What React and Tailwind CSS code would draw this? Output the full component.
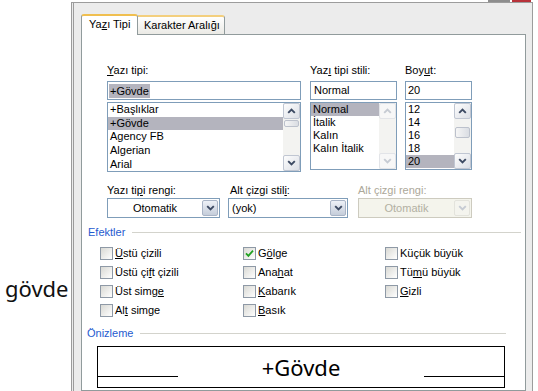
import React from 'react';

// ─── small parts ────────────────────────────────────────────────────────────

const Chevron = ({ up, disabled }) => (
  <svg width="9" height="6" viewBox="0 0 9 6" className={up ? 'rotate-180' : ''}>
    <path
      d="M1.2 1.2 L4.5 4.5 L7.8 1.2"
      fill="none"
      stroke={disabled ? '#c6cbd3' : '#3d4a63'}
      strokeWidth="1.9"
    />
  </svg>
);

const ScrollBtn = ({ up, disabled }) => (
  <div
    className={`h-[16px] flex items-center justify-center rounded-[2px] border ${
      disabled
        ? 'border-[#e2e4e8] bg-[#f7f7f7]'
        : 'border-[#c0c6d2] bg-linear-to-br from-[#fdfdfd] to-[#dcdfe6]'
    }`}
  >
    <Chevron up={up} disabled={disabled} />
  </div>
);

const ScrollBar = ({ disabled, thumbClass }) => (
  <div className="w-[17px] flex flex-col bg-[#f3f3f1]">
    <ScrollBtn up disabled={disabled} />
    {thumbClass && (
      <div
        className={`rounded-[2px] border border-[#bcc1cc] bg-linear-to-r from-[#f6f6f6] to-[#dadde3] ${thumbClass}`}
      />
    )}
    <div className="flex-1" />
    <ScrollBtn disabled={disabled} />
  </div>
);

const ListBox = ({ items, selected, boxClass, rowClass, disabled, thumbClass }) => (
  <div className={`flex border border-[#7f9db9] bg-white ${boxClass}`}>
    <div className="flex-1 flex flex-col">
      {items.map((it) => (
        <div
          key={it}
          className={`pl-[2px] flex items-center ${rowClass} ${it === selected ? 'bg-[#b4b4be]' : ''}`}
        >
          {it}
        </div>
      ))}
    </div>
    <ScrollBar disabled={disabled} thumbClass={thumbClass} />
  </div>
);

const Combo = ({ value, disabled, center, boxClass }) => (
  <div
    className={`h-[20px] flex items-center border ${boxClass} ${
      disabled ? 'border-[#cdcbbf] bg-[#f4f4ec]' : 'border-[#7f9db9] bg-white'
    }`}
  >
    <span
      className={`flex-1 ${center ? 'text-center' : 'pl-[3px]'} ${
        disabled ? 'text-[#b2b0a2]' : 'text-black'
      }`}
    >
      {value}
    </span>
    <div
      className={`w-[16px] h-[16px] mr-px flex items-center justify-center rounded-[2px] border ${
        disabled
          ? 'border-[#e3e3dc] bg-[#f4f4ee]'
          : 'border-[#a9b4c6] bg-linear-to-b from-[#eef1f7] to-[#c5cdda]'
      }`}
    >
      <Chevron disabled={disabled} />
    </div>
  </div>
);

const CheckBox = ({ checked, children }) => (
  <div className="flex items-center gap-[2px]">
    <div className="w-[13px] h-[13px] border border-[#8e99a6] bg-linear-to-br from-[#d9d9d4] to-white flex items-center justify-center">
      {checked && (
        <svg width="9" height="9" viewBox="0 0 9 9">
          <path d="M1 4.3 L3.4 6.8 L8 1.6" fill="none" stroke="#21a121" strokeWidth="1.8" />
        </svg>
      )}
    </div>
    <span>{children}</span>
  </div>
);

const Label = ({ children, disabled }) => (
  <div className={`h-[13px] leading-[13px] ${disabled ? 'text-[#aca899]' : 'text-black'}`}>
    {children}
  </div>
);

// ─── App ────────────────────────────────────────────────────────────────────

export default function App() {
  return (
    <div className="flex w-[538px] h-[391px] overflow-hidden bg-white font-['Liberation_Sans',sans-serif] text-[11px] leading-[13px] text-black">
      {/* text outside the dialog */}
      <div className="w-[71px] shrink-0 pt-[277px] pl-[5px] font-['Noto_Sans',sans-serif] text-[22px] leading-none text-[#111]">
        gövde
      </div>

      {/* window */}
      <div className="w-[462px] shrink-0 flex flex-col">
        <div className="h-[2px] flex justify-end">
          <div className="w-[22px] bg-[#8d8d8d]" />
          <div className="w-[19px] ml-[2px] mr-[2px] bg-[#b8323a]" />
        </div>

        <div className="flex-1 flex flex-col border-t border-r border-l-[3px] border-double border-[#9c9c9c] bg-[#ececec] pt-[11px] pl-[7px] pr-[6px]">
          {/* tabs */}
          <div className="h-[20px] flex items-end">
            <div className="relative z-10 w-[57px] h-[21px] -mb-px bg-white border-x border-t-2 border-[#919b9c] border-t-[#f0bf50] rounded-t-[3px] pl-[7px] pt-[2px]">
              Ya<u>z</u>ı Tipi
            </div>
            <div className="w-[87px] h-[19px] border-r border-t-2 border-[#919b9c] border-t-[#f3cf7e] rounded-tr-[3px] bg-linear-to-b from-white to-[#ebeae5] pl-[6px] pt-[2px]">
              Karakter Aralı<u>ğ</u>ı
            </div>
          </div>

          {/* panel */}
          <div className="flex-1 border border-[#919b9c] bg-white flex flex-col">
            {/* font / style / size */}
            <div className="flex pl-[25px] pt-[29px]">
              <div className="w-[194px] flex flex-col">
                <Label>
                  <u>Y</u>azı tipi:
                </Label>
                <div className="mt-[4px] h-[19px] border border-[#7f9db9] flex items-center">
                  <span className="ml-[1px] px-[1px] bg-[#b4b4be] leading-[14px]">+Gövde</span>
                </div>
                <ListBox
                  items={['+Başlıklar', '+Gövde', 'Agency FB', 'Algerian', 'Arial']}
                  selected="+Gövde"
                  boxClass="mt-[2px] h-[70px]"
                  rowClass="h-[14px]"
                  thumbClass="mx-px mt-[1px] h-[7px]"
                />
              </div>

              <div className="w-[87px] ml-[9px] flex flex-col">
                <Label>
                  Yaz<u>ı</u> tipi stili:
                </Label>
                <div className="mt-[4px] h-[19px] border border-[#7f9db9] flex items-center pl-[3px]">
                  Normal
                </div>
                <ListBox
                  items={['Normal', 'İtalik', 'Kalın', 'Kalın İtalik']}
                  selected="Normal"
                  boxClass="mt-[2px] h-[68px]"
                  rowClass="h-[13px]"
                  disabled
                />
              </div>

              <div className="w-[67px] ml-[8px] flex flex-col">
                <Label>
                  Boy<u>u</u>t:
                </Label>
                <div className="mt-[4px] h-[19px] border border-[#7f9db9] flex items-center pl-[2px]">
                  20
                </div>
                <ListBox
                  items={['12', '14', '16', '18', '20']}
                  selected="20"
                  boxClass="mt-[2px] h-[68px]"
                  rowClass="h-[13px]"
                  thumbClass="mx-px mt-[8px] h-[11px]"
                />
              </div>
            </div>

            {/* colour / underline */}
            <div className="flex pl-[25px] mt-[12px]">
              <div className="w-[113px] flex flex-col">
                <Label>
                  Yazı ti<u>p</u>i rengi:
                </Label>
                <Combo value="Otomatik" center boxClass="mt-[1px]" />
              </div>
              <div className="w-[120px] ml-[8px] flex flex-col">
                <div className="pl-[2px]">
                  <Label>
                    Alt çizgi stil<u>i</u>:
                  </Label>
                </div>
                <Combo value="(yok)" boxClass="mt-[1px]" />
              </div>
              <div className="w-[114px] ml-[10px] flex flex-col">
                <Label disabled>Alt çizgi rengi:</Label>
                <Combo value="Otomatik" center disabled boxClass="mt-[1px]" />
              </div>
            </div>

            {/* effects */}
            <div className="flex items-center mt-[8px] ml-[6px] mr-[4px] h-[13px]">
              <span className="text-[#1f5bcf]">Efektler</span>
              <div className="flex-1 ml-[7px] border-t border-[#d3d3cc]" />
            </div>

            <div className="mt-[5px] ml-[18px] grid grid-cols-[143px_142px_auto] auto-rows-[19px] items-center">
              <CheckBox>
                <u>Ü</u>stü çizili
              </CheckBox>
              <CheckBox checked>
                G<u>ö</u>lge
              </CheckBox>
              <CheckBox>Küçük büyük</CheckBox>

              <CheckBox>
                Üstü çi<u>f</u>t çizili
              </CheckBox>
              <CheckBox>
                Ana<u>h</u>at
              </CheckBox>
              <CheckBox>
                Tü<u>m</u>ü büyük
              </CheckBox>

              <CheckBox>
                Üst simg<u>e</u>
              </CheckBox>
              <CheckBox>
                <u>K</u>abarık
              </CheckBox>
              <CheckBox>
                <u>G</u>izli
              </CheckBox>

              <CheckBox>
                Al<u>t</u> simge
              </CheckBox>
              <CheckBox>
                <u>B</u>asık
              </CheckBox>
              <div />
            </div>

            {/* preview */}
            <div className="flex items-center mt-[7px] ml-[5px] mr-[19px] h-[13px]">
              <span className="text-[#1f5bcf]">Önizleme</span>
              <div className="flex-1 ml-[7px] border-t border-[#d3d3cc]" />
            </div>

            <div className="ml-[15px] mt-[6px] w-[408px] h-[42px] shrink-0 border border-black flex items-start">
              <div className="w-[80px] h-[30px] border-b border-black" />
              <div className="flex-1 text-center font-['Noto_Sans',sans-serif] text-[22px] leading-none pt-[9px]">
                +Gövde
              </div>
              <div className="w-[80px] h-[30px] border-b border-black" />
            </div>
          </div>
        </div>
      </div>
    </div>
  );
}
